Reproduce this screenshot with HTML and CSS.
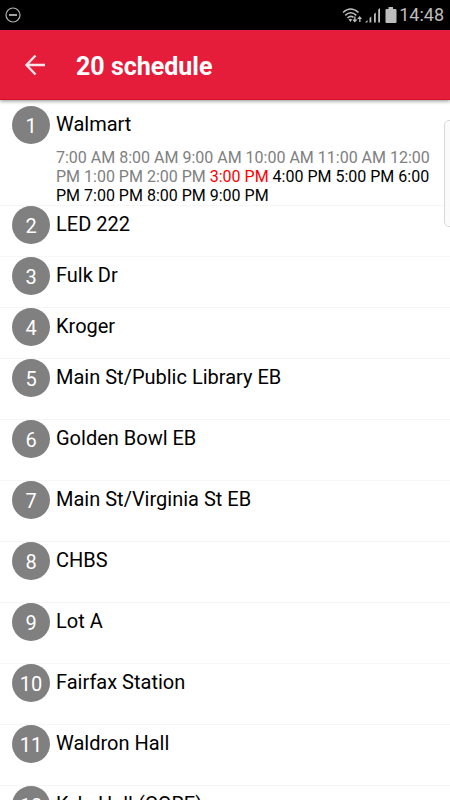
FILE: index.html
```html
<!DOCTYPE html>
<html lang="en">
<head>
  <meta charset="UTF-8">
  <meta name="viewport" content="width=device-width, initial-scale=1">
  <title>20 schedule</title>
  <link rel="stylesheet" href="styles.css">
</head>
<body>
  <div class="status-bar">
    <svg viewBox="0 0 16 16" width="16" height="16" fill="none" stroke="#b4b4b4">
      <circle cx="8" cy="8" r="7" stroke-width="1.2"/>
      <path d="M4 8h8" stroke-width="1.8"/>
    </svg>
    <div class="status-icons">
      <svg viewBox="0 0 20 16" width="20" height="16" fill="none" stroke="#bdbdbd" stroke-width="1.6">
        <path d="M1 5.500Q8.500 -1.500 16.500 5.500M3.200 8.300Q8.800 3.200 14.300 8.300M5.500 11Q8.500 8 11.500 10.300"/>
        <path d="M6.500 12.500Q8.500 11 10 12.500L8.700 15z" fill="#bdbdbd" stroke="none"/>
        <path d="M13.500 9.500v3h2L12.800 15.500 10.200 12.500h2v-3zM17.200 15v-3h-2L17.700 9l2.300 3h-1.500v3z" fill="#bdbdbd" stroke="none"/>
      </svg>
      <svg class="status-signal" viewBox="0 0 16 16" width="16" height="16" fill="#bdbdbd">
        <path d="M0 15.500L2.500 13v2.500zM4.500 11l1.800-1.500v6H4.500zM9 7l1.800-1.500v10H9zM13.200 2.500L15 1v14.500h-1.800z"/>
      </svg>
      <svg class="status-battery" viewBox="0 0 12 16" width="12" height="16" fill="#bdbdbd">
        <path d="M3.500 0h4.500v2h2.500q1 0 1 1v12q0 1-1 1h-9q-1 0-1-1V3q0-1 1-1h2z"/>
      </svg>
      <span class="status-time">14:48</span>
    </div>
  </div>

  <header class="toolbar">
    <button class="back-btn" type="button" aria-label="Back">
      <svg viewBox="0 0 22 22" width="22" height="22" fill="none" stroke="#ffe3e8" stroke-width="2.4">
        <path d="M21 11H2.500M11.500 1.500L2.500 11l9 9.500"/>
      </svg>
    </button>
    <h1 class="toolbar-title">20 schedule</h1>
  </header>

  <main class="content">
    <ol class="stop-list">
      <li class="stop">
        <span class="stop-number">1</span>
        <div class="stop-body">
          <div class="stop-name">Walmart</div>
          <p class="stop-times"><span class="past">7:00 AM 8:00 AM 9:00 AM 10:00 AM 11:00 AM 12:00 PM 1:00 PM 2:00 PM</span> <span class="next">3:00 PM</span> 4:00 PM 5:00 PM 6:00 PM 7:00 PM 8:00 PM 9:00 PM</p>
        </div>
      </li>
      <li class="stop"><span class="stop-number">2</span><div class="stop-name">LED 222</div></li>
      <li class="stop"><span class="stop-number">3</span><div class="stop-name">Fulk Dr</div></li>
      <li class="stop"><span class="stop-number">4</span><div class="stop-name">Kroger</div></li>
      <li class="stop tall"><span class="stop-number">5</span><div class="stop-name">Main St/Public Library EB</div></li>
      <li class="stop tall"><span class="stop-number">6</span><div class="stop-name">Golden Bowl EB</div></li>
      <li class="stop tall"><span class="stop-number">7</span><div class="stop-name">Main St/Virginia St EB</div></li>
      <li class="stop tall"><span class="stop-number">8</span><div class="stop-name">CHBS</div></li>
      <li class="stop tall"><span class="stop-number">9</span><div class="stop-name">Lot A</div></li>
      <li class="stop tall"><span class="stop-number">10</span><div class="stop-name">Fairfax Station</div></li>
      <li class="stop tall"><span class="stop-number">11</span><div class="stop-name">Waldron Hall</div></li>
      <li class="stop tall"><span class="stop-number">12</span><div class="stop-name">Kyle Hall (CORE)</div></li>
    </ol>
  </main>

  <div class="edge-handle"></div>
</body>
</html>
```

FILE: styles.css
```css
* {
  box-sizing: border-box;
}
body {
  margin: 0;
  height: 100vh;
  display: flex;
  flex-direction: column;
  overflow: hidden;
  font-family: Roboto, "Liberation Sans", sans-serif;
  background-color: #fff;
  color: #000;
}

/* Status bar */
.status-bar {
  display: flex;
  align-items: center;
  justify-content: space-between;
  flex: none;
  height: 30px;
  padding: 0 6px 0 5px;
  background-color: #000;
  color: #bdbdbd;
}
.status-icons {
  display: flex;
  align-items: center;
}
.status-signal {
  margin: 0 4px 0 3px;
}
.status-battery {
  margin-right: 2px;
}
.status-time {
  font-size: 18px;
  line-height: 30px;
}

/* Toolbar */
.toolbar {
  position: relative;
  z-index: 1;
  display: flex;
  align-items: center;
  flex: none;
  height: 70px;
  padding-left: 24px;
  gap: 30px;
  background-color: #e51d3a;
  border-bottom: 1px solid #d5102c;
  box-shadow: 0 1px 4px rgba(0, 0, 0, 0.45);
}
.back-btn {
  display: flex;
  padding: 0;
  border: 0;
  background: none;
  cursor: pointer;
}
.toolbar-title {
  margin: 0;
  padding-top: 4px;
  color: #fff;
  font-size: 25px;
  line-height: 30px;
  font-weight: 700;
}

/* Stops */
.content {
  flex: 1;
  min-height: 0;
  overflow-y: auto;
  scrollbar-width: none;
}
.stop-list {
  margin: 0;
  padding: 6px 0 0;
  list-style: none;
}
.stop {
  display: flex;
  align-items: flex-start;
  gap: 6px;
  min-height: 51px;
  padding: 0 12px;
  border-bottom: 1px solid #f6f6f6;
}
.stop.tall {
  min-height: 61px;
}
.stop-number {
  flex: none;
  width: 38px;
  height: 38px;
  border-radius: 50%;
  background-color: #808080;
  color: #fff;
  font-size: 20px;
  line-height: 40px;
  text-align: center;
}
.stop-name {
  font-size: 20px;
  line-height: 37px;
}
.stop-times {
  margin: 5px 0 0;
  font-size: 16px;
  line-height: 19px;
}
.past {
  color: #808080;
}
.next {
  color: #f00;
}

/* Edge panel handle */
.edge-handle {
  position: fixed;
  top: 120px;
  right: -6px;
  z-index: 2;
  width: 12px;
  height: 107px;
  border: 1px solid #d8d8d8;
  border-radius: 5px;
  background-color: rgba(250, 250, 250, 0.8);
}
```
